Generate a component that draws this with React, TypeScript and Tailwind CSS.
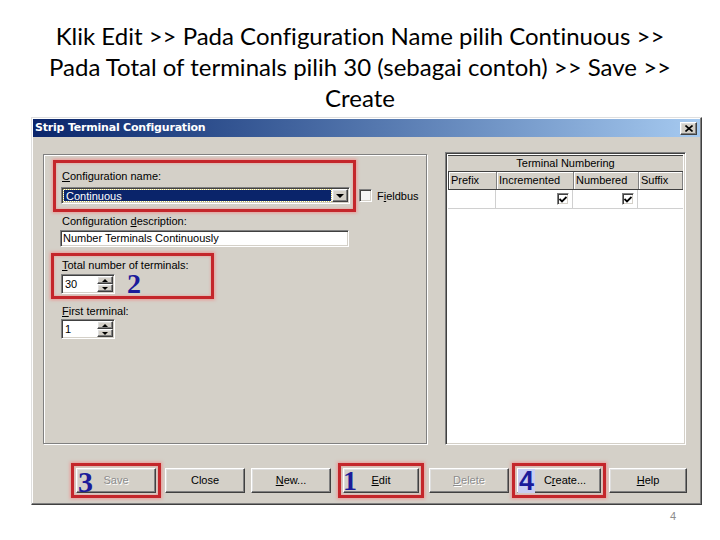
import React from 'react';

const raised =
  'border border-t-white border-l-white border-r-[#404040] border-b-[#404040] shadow-[inset_-1px_-1px_0_#808080,inset_1px_1px_0_#dfdfdf]';
const sunken =
  'border border-t-[#808080] border-l-[#808080] border-r-white border-b-white shadow-[inset_1px_1px_0_#404040,inset_-1px_-1px_0_#d4d0c8]';
const redBox =
  'border-[3px] border-[#c4262b] shadow-[0_0_3px_1px_rgba(255,110,110,0.55),inset_0_0_3px_rgba(255,110,110,0.6)]';
const serifNum = "font-['Liberation_Serif'] font-bold text-[#1b1b9a]";

function U({ children }: { children: React.ReactNode }) {
  return <span className="underline underline-offset-[1px] decoration-1">{children}</span>;
}

function ArrowUp() {
  return <div className="w-0 h-0 border-x-[3px] border-x-transparent border-b-[3px] border-b-black" />;
}
function ArrowDown({ size = 3 }: { size?: number }) {
  return size === 4 ? (
    <div className="w-0 h-0 border-x-[4px] border-x-transparent border-t-[4px] border-t-black" />
  ) : (
    <div className="w-0 h-0 border-x-[3px] border-x-transparent border-t-[3px] border-t-black" />
  );
}

function Spinner({ value }: { value: string }) {
  return (
    <div className={`flex w-[54px] h-[20px] bg-white ${sunken} p-[1px]`}>
      <div className="flex-1 leading-[17px] pl-[2px]">{value}</div>
      <div className="flex flex-col w-[16px]">
        <div className={`flex-1 bg-[#d4d0c8] ${raised} flex items-center justify-center`}>
          <ArrowUp />
        </div>
        <div className={`flex-1 bg-[#d4d0c8] ${raised} flex items-center justify-center`}>
          <ArrowDown />
        </div>
      </div>
    </div>
  );
}

function Check() {
  return (
    <div className={`w-[12px] h-[12px] bg-white ${sunken} flex items-center justify-center`}>
      <svg width="8" height="7" viewBox="0 0 8 7">
        <path d="M0.5 3 L3 5.5 L7.5 1" stroke="#000" strokeWidth="1.8" fill="none" />
      </svg>
    </div>
  );
}

function Btn({ w, children, disabled }: { w: string; children: React.ReactNode; disabled?: boolean }) {
  return (
    <div
      className={`${w} h-[25px] bg-[#d4d0c8] ${raised} flex items-center justify-center ${
        disabled ? 'text-[#8c8c8c] [text-shadow:1px_1px_0_#fff]' : 'text-black'
      }`}
    >
      {children}
    </div>
  );
}

export default function App() {
  return (
    <div className="w-[720px] h-[540px] bg-white overflow-hidden">
      <div className="pt-[20px] text-center text-[24px] leading-[31px] text-black font-['Lato',sans-serif] [font-variant-ligatures:none]">
        <p>Klik Edit &gt;&gt; Pada Configuration Name pilih Continuous &gt;&gt;</p>
        <p>Pada Total of terminals pilih 30 (sebagai contoh) &gt;&gt; Save &gt;&gt;</p>
        <p>Create</p>
      </div>

      <div className="ml-[31px] mt-[4px] w-[671px] h-[388px] bg-[#d4d0c8] border border-t-[#dfdfdf] border-l-[#dfdfdf] border-r-[#404040] border-b-[#404040] shadow-[inset_-1px_-1px_0_#808080,inset_1px_1px_0_#fff] flex flex-col text-[11px] font-['Liberation_Sans',Arial,sans-serif] text-black">
        <div className="mx-[1px] mt-[1px] h-[18px] bg-gradient-to-r from-[#0a246a] to-[#a6caf0] flex items-center justify-between pl-[2px] pr-[3px]">
          <span className="text-white font-bold text-[11px] font-['DejaVu_Sans',sans-serif] tracking-[-0.2px]">
            Strip Terminal Configuration
          </span>
          <div className={`w-[17px] h-[13px] bg-[#d4d0c8] ${raised} flex items-center justify-center`}>
            <svg width="8" height="7" viewBox="0 0 8 7">
              <path d="M0.5 0.5 L7.5 6.5 M7.5 0.5 L0.5 6.5" stroke="#000" strokeWidth="1.6" />
            </svg>
          </div>
        </div>

        <div className="flex items-start pt-[15px] pl-[11px] gap-[18px]">
          {/* left group */}
          <div className="mt-[2px] w-[384px] h-[290px] border border-[#808080] shadow-[inset_1px_1px_0_#fff,1px_1px_0_#fff] flex flex-col pt-[5px] pl-[9px]">
            <div className="flex items-end">
              <div className={`w-[303px] h-[52px] ${redBox} pl-[5px] pt-[7px]`}>
                <div className="leading-[13px] pl-[1px]">
                  <U>C</U>onfiguration name:
                </div>
                <div className={`mt-[4px] w-[289px] h-[17px] bg-white ${sunken} p-[1px] flex`}>
                  <div className="flex-1 bg-[#0a246a] text-white leading-[13px] pl-[2px] m-[1px] outline-1 outline-dotted outline-[#c8c060]">
                    Continuous
                  </div>
                  <div className={`w-[16px] bg-[#d4d0c8] ${raised} flex items-center justify-center`}>
                    <ArrowDown size={4} />
                  </div>
                </div>
              </div>
              <div className="ml-[3px] mb-[8px] flex items-center gap-[5px]">
                <div className={`w-[13px] h-[13px] bg-[#f4f4f4] ${sunken}`} />
                <span>
                  F<U>i</U>eldbus
                </span>
              </div>
            </div>

            <div className="mt-[3px] ml-[9px] leading-[13px]">
              Configuration <U>d</U>escription:
            </div>
            <div className={`mt-[2px] ml-[7px] w-[289px] h-[17px] bg-white ${sunken} leading-[15px] pl-[2px]`}>
              Number Terminals Continuously
            </div>

            <div className={`mt-[6px] -ml-[2px] w-[163px] h-[46px] ${redBox} pl-[7px] pt-[3px]`}>
              <div className="leading-[13px] pl-[1px]">
                <U>T</U>otal number of terminals:
              </div>
              <div className="mt-[2px] flex items-center">
                <Spinner value="30" />
                <span className={`${serifNum} text-[28px] leading-[20px] ml-[12px]`}>2</span>
              </div>
            </div>

            <div className="mt-[6px] ml-[9px] leading-[13px]">
              <U>F</U>irst terminal:
            </div>
            <div className="mt-[1px] ml-[8px]">
              <Spinner value="1" />
            </div>
          </div>

          {/* right table */}
          <div className={`w-[241px] h-[293px] bg-white ${sunken} p-[2px] flex flex-col`}>
            <div className="h-[16px] bg-[#d4d0c8] border-t border-[#404040] text-center leading-[14px]">
              Terminal Numbering
            </div>
            <div className="flex h-[19px] bg-[#d4d0c8] border-t border-l border-b border-[#404040] leading-[17px]">
              <div className="w-[48px] pl-[2px] border-r border-[#808080] shadow-[inset_1px_1px_0_#fff]">Prefix</div>
              <div className="w-[77px] pl-[2px] border-r border-[#808080] shadow-[inset_1px_1px_0_#fff]">Incremented</div>
              <div className="w-[65px] pl-[2px] border-r border-[#808080] shadow-[inset_1px_1px_0_#fff]">Numbered</div>
              <div className="flex-1 pl-[2px] border-r border-[#808080] shadow-[inset_1px_1px_0_#fff]">Suffix</div>
            </div>
            <div className="flex h-[19px] border-b border-[#d0d0d0]">
              <div className="w-[48px] border-r border-[#d0d0d0]" />
              <div className="w-[77px] border-r border-[#d0d0d0] flex items-center justify-end pr-[3px]">
                <Check />
              </div>
              <div className="w-[65px] border-r border-[#d0d0d0] flex items-center justify-end pr-[3px]">
                <Check />
              </div>
              <div className="flex-1" />
            </div>
          </div>
        </div>

        {/* buttons */}
        <div className="mt-[18px] h-[35px] flex items-center pl-[39px]">
          <div className={`relative ${redBox} p-[2px]`}>
            <Btn w="w-[80px]" disabled>
              Save
            </Btn>
            <span className={`absolute left-[4px] top-[2px] ${serifNum} text-[30px] leading-[27px]`}>3</span>
          </div>
          <div className="ml-[4px]">
            <Btn w="w-[80px]">Close</Btn>
          </div>
          <div className="ml-[6px]">
            <Btn w="w-[80px]">
              <span>
                <U>N</U>ew...
              </span>
            </Btn>
          </div>
          <div className={`relative ml-[7px] ${redBox} p-[2px]`}>
            <Btn w="w-[76px]">
              <span>
                <U>E</U>dit
              </span>
            </Btn>
            <span className={`absolute left-[2px] top-[2px] ${serifNum} text-[28px] leading-[26px]`}>1</span>
          </div>
          <div className="ml-[5px]">
            <Btn w="w-[80px]" disabled>
              <span>
                <U>D</U>elete
              </span>
            </Btn>
          </div>
          <div className={`relative ml-[3px] ${redBox} p-[2px]`}>
            <Btn w="w-[84px]">
              <span className="pl-[12px]">
                C<U>r</U>eate...
              </span>
            </Btn>
            <span className="absolute left-[3px] top-[3px] h-[24px] px-[1px] bg-[#c9cdf2] font-['Liberation_Sans'] font-bold text-[#1b1b9a] text-[27px] leading-[24px]">
              4
            </span>
          </div>
          <div className="ml-[3px]">
            <Btn w="w-[78px]">
              <span>
                <U>H</U>elp
              </span>
            </Btn>
          </div>
        </div>
      </div>

      <div className="mt-[5px] pl-[670px] text-[11px] leading-[12px] text-[#8c8c8c] font-['Liberation_Sans',sans-serif]">
        4
      </div>
    </div>
  );
}
